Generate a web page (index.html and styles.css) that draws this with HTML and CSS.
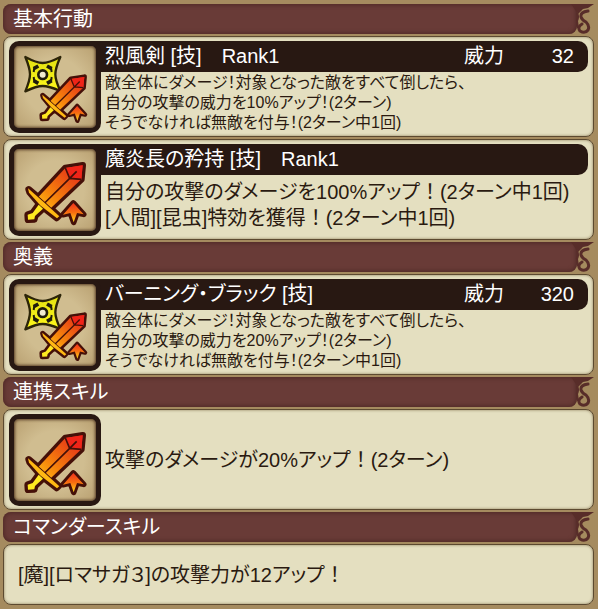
FILE: index.html
```html
<!DOCTYPE html>
<html lang="ja">
<head>
    <meta charset="UTF-8">
    <meta name="viewport" content="width=device-width, initial-scale=1.0">
    <title>スキル</title>
    <link rel="stylesheet" href="styles.css">
</head>
<body>

    <!-- 共通アイコン -->
    <svg class="sprite" width="0" height="0" aria-hidden="true">
        <defs>
            <linearGradient id="blade" gradientUnits="userSpaceOnUse" x1="245" y1="90" x2="115" y2="220">
                <stop offset="0" stop-color="#f0201c"/>
                <stop offset="0.3" stop-color="#ea4c14"/>
                <stop offset="0.7" stop-color="#f8880c"/>
                <stop offset="1" stop-color="#ffc018"/>
            </linearGradient>
            <linearGradient id="arrow" x1="0" y1="0" x2="0" y2="1">
                <stop offset="0" stop-color="#f0301c"/>
                <stop offset="0.5" stop-color="#f87010"/>
                <stop offset="1" stop-color="#ffd81c"/>
            </linearGradient>
            <linearGradient id="steel" x1="0" y1="0" x2="0" y2="1">
                <stop offset="0" stop-color="#e2e012"/>
                <stop offset="1" stop-color="#fff81c"/>
            </linearGradient>
            <g id="sword-shape" stroke="#451008" stroke-linejoin="round">
                <!-- 縁取り -->
                <path fill="#451008" stroke-width="20" d="M248 88 196 96 116 182 152 217 244 130Z M86 160 130 197 176 240 170 246 122 208 89 169Z M116 206 129 218 105 240 103 250 84 251 83 236 98 231Z"/>
                <path fill="url(#blade)" stroke="none" d="M248 88 196 96 116 182 152 217 244 130Z"/>
                <path fill="#f02418" stroke="none" d="M248 88 196 96 209 127 244 130Z"/>
                <path fill="none" stroke-width="5" d="M196 96 209 127 244 130M209 127 134 201M209 127 230 106"/>
                <path fill="#ffb814" stroke-width="5" paint-order="stroke" d="M84 157 130 197 178 241 171 247 122 209 87 170Z"/>
                <path fill="#ffe820" stroke="none" d="M116 206 129 218 105 240 103 250 84 251 83 236 98 231Z"/>
                <path fill="url(#arrow)" stroke-width="17" paint-order="stroke" d="M220 201 251 235 231 231 221 259 211 231 189 236Z"/>
            </g>
            <symbol id="sword" viewBox="27 24 276 276">
                <use href="#sword-shape"/>
            </symbol>
            <symbol id="star-sword" viewBox="27 24 276 276">
                <path fill="url(#steel)" stroke="#2c2408" stroke-width="7" stroke-linejoin="round" d="M76 72 Q110 90 128 90 Q146 90 181 72 Q166 106 166 124 Q166 142 181 174 Q146 159 128 159 Q110 159 76 175 Q90 142 90 124 Q90 106 76 72Z"/>
                <path fill="none" stroke="#201c0c" stroke-width="11" d="M101 107 115 99M155 107 141 99M101 143 115 151M155 143 141 151"/>
                <path fill="none" stroke="#201c0c" stroke-width="6" d="M103 104 101 117M153 104 155 117M103 146 101 132M153 146 155 132"/>
                <circle cx="128" cy="125" r="17" fill="#201c0c"/>
                <circle cx="128" cy="125" r="9" fill="#f0ead0"/>
                <use href="#sword-shape" transform="matrix(.77 0 0 .77 62 64)"/>
            </symbol>
            <symbol id="flourish" viewBox="0 0 24 30">
                <path fill="#582d29" d="M0 0H23L17 4 12 5 7 10Z"/>
                <path fill="none" stroke="#582d29" stroke-width="3" stroke-linecap="round" d="M17 7Q9 8 10 13Q11 16 15 18Q19 22 17 26Q14 30 9 27Q6 23 11 20"/>
                <path fill="none" stroke="#582d29" stroke-width="2" d="M6 9Q8 13 6 17L7 24"/>
            </symbol>
        </defs>
    </svg>

    <main class="skills">

        <!-- 基本行動 -->
        <h2 class="heading">基本行動<svg class="flourish"><use href="#flourish"/></svg></h2>

        <article class="card">
            <div class="icon"><svg><use href="#star-sword"/></svg></div>
            <div class="detail">
                <h3 class="title">
                    <span class="name">烈風剣 [技]　Rank1</span>
                    <span class="label">威力</span>
                    <span class="power">32</span>
                </h3>
                <p class="text small">敵全体にダメージ！対象となった敵をすべて倒したら、<br>自分の攻撃の威力を10%アップ！(2ターン)<br>そうでなければ無敵を付与！(2ターン中1回)</p>
            </div>
        </article>

        <article class="card">
            <div class="icon"><svg><use href="#sword"/></svg></div>
            <div class="detail">
                <h3 class="title">
                    <span class="name">魔炎長の矜持 [技]　Rank1</span>
                </h3>
                <p class="text">自分の攻撃のダメージを100%アップ<span class="mark">！</span>(2ターン中1回)<br>[人間][昆虫]特効を獲得<span class="mark">！</span>(2ターン中1回)</p>
            </div>
        </article>

        <!-- 奥義 -->
        <h2 class="heading">奥義<svg class="flourish"><use href="#flourish"/></svg></h2>

        <article class="card">
            <div class="icon"><svg><use href="#star-sword"/></svg></div>
            <div class="detail">
                <h3 class="title">
                    <span class="name">バーニング・ブラック [技]</span>
                    <span class="label">威力</span>
                    <span class="power">320</span>
                </h3>
                <p class="text small">敵全体にダメージ！対象となった敵をすべて倒したら、<br>自分の攻撃の威力を20%アップ！(2ターン)<br>そうでなければ無敵を付与！(2ターン中1回)</p>
            </div>
        </article>

        <!-- 連携スキル -->
        <h2 class="heading">連携スキル<svg class="flourish"><use href="#flourish"/></svg></h2>

        <article class="card">
            <div class="icon"><svg><use href="#sword"/></svg></div>
            <div class="detail center">
                <p class="text">攻撃のダメージが20%アップ<span class="mark">！</span>(2ターン)</p>
            </div>
        </article>

        <!-- コマンダースキル -->
        <h2 class="heading">コマンダースキル<svg class="flourish"><use href="#flourish"/></svg></h2>

        <article class="card commander">
            <p class="text">[魔][ロマサガ３]の攻撃力が12アップ<span class="mark">！</span></p>
        </article>

    </main>

</body>
</html>
```
FILE: styles.css
```css
/* General */
* {
    box-sizing: border-box;
}

body {
    margin: 0;
    background: #a58b5f;
    font-family: "Liberation Sans", "Noto Sans CJK JP", sans-serif;
    font-feature-settings: "palt";
    font-size: 20px;
    color: #2a1a10;
}

h2, h3, p {
    margin: 0;
    font-size: 20px;
    font-weight: normal;
}

.sprite {
    position: absolute;
}

.skills {
    display: flex;
    flex-direction: column;
    gap: 2px;
    padding: 4px 4px 4px 3px;
}

/* 見出し */
.heading {
    position: relative;
    height: 30px;
    margin-right: 17px;
    padding-left: 10px;
    line-height: 30px;
    color: #fff;
    background: #693b37;
    border-radius: 8px 0 8px 8px;
    box-shadow: inset 0 0 4px 1px #4e2825;
}

.flourish {
    position: absolute;
    top: 0;
    right: -18px;
    width: 24px;
    height: 30px;
}

/* カード */
.card {
    display: flex;
    min-height: 101px;
    padding: 4px 5px 3px;
    background: #e4dfc0;
    border: 1px solid #5c4a30;
    border-radius: 8px;
    box-shadow: inset 0 0 3px #8d7c58;
}

/* タイトル帯の上に重ねる */
.icon {
    position: relative;
    z-index: 1;
    flex: none;
    width: 92px;
    height: 92px;
    background: radial-gradient(#d0bd90 50%, #b89f70);
    border: 5px solid #281812;
    border-radius: 10px;
    box-shadow: inset 0 0 3px 1px #5a4028;
}

.icon svg {
    display: block;
    width: 92px;
    height: 92px;
    margin: -5px;
}

.detail {
    flex: 1;
    min-width: 0;
}

.center {
    display: flex;
    align-items: center;
}

.title {
    display: flex;
    height: 31px;
    margin-left: -12px;
    padding: 0 14px 0 16px;
    line-height: 31px;
    color: #fff;
    background: #281812;
    border-radius: 0 10px 10px 0;
}

.name {
    flex: 1;
}

.power {
    width: 70px;
    text-align: right;
}

.text {
    padding: 4px 0 0 4px;
    line-height: 26px;
}

/* 全角幅の感嘆符 */
.mark {
    font-feature-settings: normal;
}

.center .text {
    padding-top: 0;
}

.small {
    padding-top: 1px;
    font-size: 16px;
    line-height: 20px;
}

.commander {
    align-items: center;
    min-height: 61px;
    padding: 0 10px;
}

.commander .text {
    padding-top: 0;
}
```
